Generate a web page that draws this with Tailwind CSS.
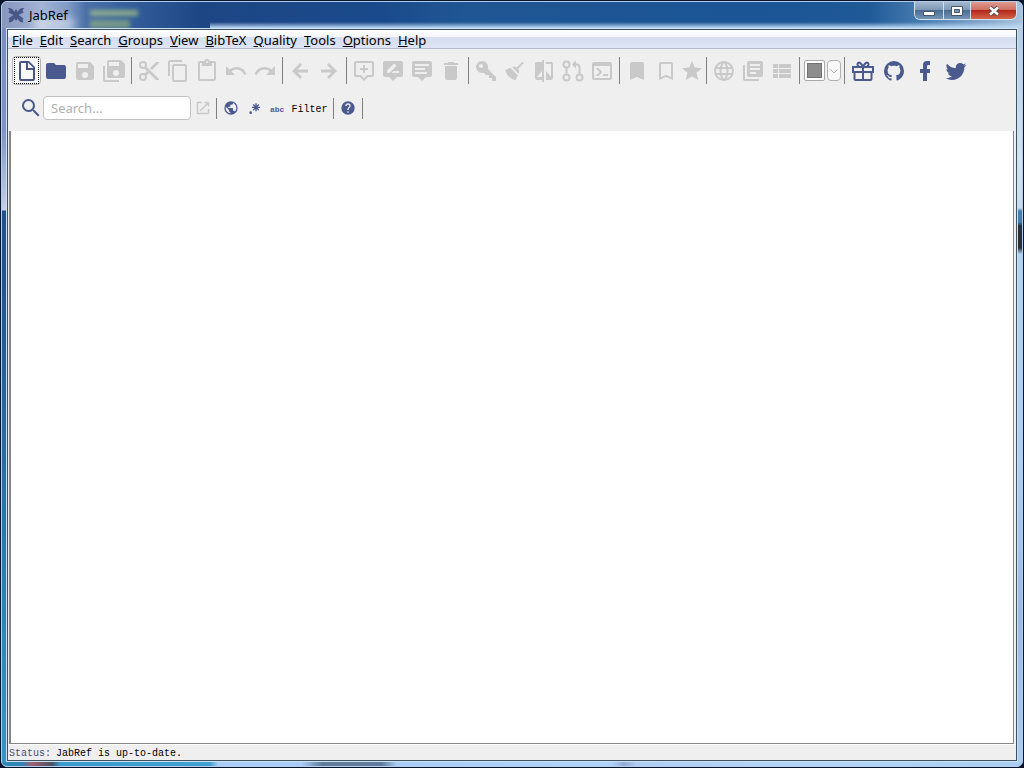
<!DOCTYPE html>
<html lang="en">

<head>
    <meta charset="UTF-8">
    <meta name="viewport" content="width=device-width, initial-scale=1.0">
    <title>JabRef</title>
    <script src="https://cdn.jsdelivr.net/npm/@tailwindcss/browser@4"></script>
</head>

<body class="h-screen flex bg-[#08142c] p-px font-['Noto_Sans','Open_Sans',sans-serif] text-black">

    <!-- Window frame -->
    <div class="flex-1 min-w-0 flex flex-col rounded-md overflow-hidden border border-[#b4cdea] bg-[#a9cdf3]">

        <!-- Title bar -->
        <header
            class="relative h-[26px] shrink-0 flex items-start justify-between overflow-hidden bg-[linear-gradient(to_right,#8796bd_0px,#a3b3d6_40px,#7f9ac6_66px,#4a70a8_84px,#2f5a97_140px,#1d4684_200px,#1a4a8b_380px,#205693_460px,#1b5596_75%,#1f5a97_85%,#4f82b5_91%,#a8c3dd_100%)]">
            <div class="absolute left-22 top-2 w-12 h-1.5 bg-[#9dba86]/80 blur-[2px]"></div>
            <div class="absolute left-22 top-4.5 w-10 h-2 bg-[#8fb07f]/70 blur-[2px]"></div>
            <div class="absolute left-8 top-4 w-10 h-3 bg-white/50 blur-[4px]"></div>
            <div class="absolute left-52 right-0 bottom-0 h-1.5 bg-[linear-gradient(to_bottom,transparent,#bcd9f3)]"></div>
            <div class="relative flex items-center gap-1 pl-[5px] pt-1">
                <svg class="w-4.5 h-4.5" viewBox="0 0 18 18" fill="#485788">
                    <path
                        d="M1 2C4 1.500 6 3 7.500 6L8.500 3.500H9.500L10.500 6C12 3 14 1.500 17 2L15.500 4.500L16.500 6.500L14.500 7.500L11.500 9L14.500 11L16.500 12.500L15.500 14L16.500 16.500C14 16.500 12 15.500 10.500 12.500L9.500 14.500H8.500L7.500 12.500C6 15.500 4 16.500 1.500 16.500L2.500 14L1.500 12.500L3.500 11L6.500 9L3.500 7.500L1.500 6.500L2.500 4.500Z" />
                </svg>
                <h1 class="text-[13px] leading-4">JabRef</h1>
            </div>
            <div
                class="relative flex h-[18px] mr-[5px] rounded-b-md border border-t-0 border-[#d3e2f1] overflow-hidden">
                <button aria-label="Minimize"
                    class="w-7 flex justify-center items-center bg-[linear-gradient(to_bottom,#a3b8ce,#7b97b5_50%,#4b6d93_50%,#7495b5)]">
                    <svg class="w-4 h-4" viewBox="0 0 16 16">
                        <path d="M2.500 8.500H13.500V12.500H2.500Z" fill="#fff" stroke="#46566b" />
                    </svg>
                </button>
                <button aria-label="Maximize"
                    class="w-[27px] flex justify-center items-center border-l border-[#d3e2f1] bg-[linear-gradient(to_bottom,#a3b8ce,#7b97b5_50%,#4b6d93_50%,#7495b5)]">
                    <svg class="w-4 h-4" viewBox="0 0 16 16">
                        <path d="M2.500 3.500H13.500V12.500H2.500Z" fill="#fff" stroke="#46566b" />
                        <path d="M5.500 6.500H10.500V9.500H5.500Z" fill="#7b97b5" stroke="#46566b" />
                    </svg>
                </button>
                <button aria-label="Close"
                    class="w-[46px] flex justify-center items-center border-l border-[#d3e2f1] bg-[linear-gradient(to_bottom,#dd9c8f,#cf6b5c_50%,#b5271c_50%,#d3654a)]">
                    <svg class="w-4 h-4" viewBox="0 0 16 16">
                        <path d="M4 4.500L12 11.500M12 4.500L4 11.500" stroke="#5a4a52" stroke-width="4.500" />
                        <path d="M4 4.500L12 11.500M12 4.500L4 11.500" stroke="#fff" stroke-width="2.500" />
                    </svg>
                </button>
            </div>
        </header>

        <div class="flex-1 min-h-0 flex">
            <div
                class="w-1 shrink-0 bg-[linear-gradient(to_bottom,#7b8dc0,#8291c2_100px,#bcc6e2_172px,#c8d0e8_182px,#1f4f8f_183px,#23589a_40%,#2b8abb_85%,#3596c6)]">
            </div>

            <!-- Client area -->
            <div class="flex-1 min-w-0 border border-[#cfe3f7]">
                <div class="h-full flex flex-col border border-[#3b4f5e] bg-[#efefef]">

                    <nav
                        class="h-[19px] shrink-0 flex items-center gap-[7px] pl-1 pt-px border-b border-[#b5b9c8] text-[13px] leading-4 bg-[linear-gradient(to_bottom,#ffffff,#f4f6fc_38%,#d7def0_42%,#dde4f6)]">
                        <button><u>F</u>ile</button>
                        <button><u>E</u>dit</button>
                        <button><u>S</u>earch</button>
                        <button><u>G</u>roups</button>
                        <button><u>V</u>iew</button>
                        <button><u>B</u>ibTeX</button>
                        <button><u>Q</u>uality</button>
                        <button><u>T</u>ools</button>
                        <button><u>O</u>ptions</button>
                        <button><u>H</u>elp</button>
                    </nav>

                    <!-- Main toolbar -->
                    <div class="h-[43px] shrink-0 flex items-center pl-1 text-[#c9c9c9]">
                        <div class="flex">
                            <button aria-label="New database"
                                class="w-[29px] h-[29px] flex justify-center items-center rounded-sm border border-[#b4b4b4] bg-[#f8f8f8] text-[#485585]">
                                <span class="w-[25px] h-[27px] flex justify-center items-center border border-dotted border-black">
                                    <svg class="w-6 h-6 shrink-0" viewBox="0 0 24 24" fill="currentColor">
                                        <path d="M13,9H18.5L13,3.5V9M6,2H14L20,8V20A2,2 0 0,1 18,22H6C4.89,22 4,21.1 4,20V4C4,2.89 4.89,2 6,2M11,4H6V20H18V11H11V4Z" />
                                    </svg>
                                </span>
                            </button>
                            <button aria-label="Open database" class="w-[29px] flex justify-center items-center text-[#4a5a8f]">
                                <svg class="w-6 h-6" viewBox="0 0 24 24" fill="currentColor">
                                    <path d="M10,4H4C2.89,4 2,4.89 2,6V18A2,2 0 0,0 4,20H20A2,2 0 0,0 22,18V8C22,6.89 21.1,6 20,6H12L10,4Z" />
                                </svg>
                            </button>
                            <button disabled aria-label="Save" class="w-[29px] flex justify-center items-center">
                                <svg class="w-6 h-6" viewBox="0 0 24 24" fill="currentColor">
                                    <path d="M15,9H5V5H15M12,19A3,3 0 0,1 9,16A3,3 0 0,1 12,13A3,3 0 0,1 15,16A3,3 0 0,1 12,19M17,3H5C3.89,3 3,3.9 3,5V19A2,2 0 0,0 5,21H19A2,2 0 0,0 21,19V7L17,3Z" />
                                </svg>
                            </button>
                            <button disabled aria-label="Save all" class="w-[29px] flex justify-center items-center">
                                <svg class="w-6 h-6" viewBox="0 0 24 24" fill="currentColor">
                                    <path d="M17,7V3H7V7H17M14,17A3,3 0 0,0 17,14A3,3 0 0,0 14,11A3,3 0 0,0 11,14A3,3 0 0,0 14,17M19,1L23,5V17A2,2 0 0,1 21,19H7C5.89,19 5,18.1 5,17V3A2,2 0 0,1 7,1H19M1,7H3V21H17V23H3A2,2 0 0,1 1,21V7Z" />
                                </svg>
                            </button>
                        </div>

                        <div class="w-px h-[27px] ml-[3px] mr-[2px] bg-[#808080]"></div>

                        <div class="flex">
                            <button disabled aria-label="Cut" class="w-[29px] flex justify-center items-center">
                                <svg class="w-6 h-6" viewBox="0 0 24 24" fill="currentColor">
                                    <path d="M19,3L13,9L15,11L22,4V3M12,12.5A0.5,0.5 0 0,1 11.5,12A0.5,0.5 0 0,1 12,11.5A0.5,0.5 0 0,1 12.5,12A0.5,0.5 0 0,1 12,12.5M6,20A2,2 0 0,1 4,18C4,16.89 4.9,16 6,16A2,2 0 0,1 8,18C8,19.11 7.1,20 6,20M6,8A2,2 0 0,1 4,6C4,4.89 4.9,4 6,4A2,2 0 0,1 8,6C8,7.11 7.1,8 6,8M9.64,7.64C9.87,7.14 10,6.59 10,6A4,4 0 0,0 6,2A4,4 0 0,0 2,6A4,4 0 0,0 6,10C6.59,10 7.14,9.87 7.64,9.64L10,12L7.64,14.36C7.14,14.13 6.59,14 6,14A4,4 0 0,0 2,18A4,4 0 0,0 6,22A4,4 0 0,0 10,18C10,17.41 9.87,16.86 9.64,16.36L12,14L19,21H22V20L9.64,7.64Z" />
                                </svg>
                            </button>
                            <button disabled aria-label="Copy" class="w-[29px] flex justify-center items-center">
                                <svg class="w-6 h-6" viewBox="0 0 24 24" fill="currentColor">
                                    <path d="M19,21H8V7H19M19,5H8A2,2 0 0,0 6,7V21A2,2 0 0,0 8,23H19A2,2 0 0,0 21,21V7A2,2 0 0,0 19,5M16,1H4A2,2 0 0,0 2,3V17H4V3H16V1Z" />
                                </svg>
                            </button>
                            <button disabled aria-label="Paste" class="w-[29px] flex justify-center items-center">
                                <svg class="w-6 h-6" viewBox="0 0 24 24" fill="currentColor">
                                    <path d="M19,20H5V4H7V7H17V4H19M12,2A1,1 0 0,1 13,3A1,1 0 0,1 12,4A1,1 0 0,1 11,3A1,1 0 0,1 12,2M19,2H14.82C14.4,0.84 13.3,0 12,0C10.7,0 9.6,0.84 9.18,2H5A2,2 0 0,0 3,4V20A2,2 0 0,0 5,22H19A2,2 0 0,0 21,20V4A2,2 0 0,0 19,2Z" />
                                </svg>
                            </button>
                            <button disabled aria-label="Undo" class="w-[29px] flex justify-center items-center">
                                <svg class="w-6 h-6" viewBox="0 0 24 24" fill="currentColor">
                                    <path d="M12.5,8C9.85,8 7.45,9 5.6,10.6L2,7V16H11L7.38,12.38C8.77,11.22 10.54,10.5 12.5,10.5C16.04,10.5 19.05,12.81 20.1,16L22.47,15.22C21.08,11.03 17.15,8 12.5,8Z" />
                                </svg>
                            </button>
                            <button disabled aria-label="Redo" class="w-[29px] flex justify-center items-center">
                                <svg class="w-6 h-6" viewBox="0 0 24 24" fill="currentColor">
                                    <path d="M18.4,10.6C16.55,9 14.15,8 11.5,8C6.85,8 2.92,11.03 1.54,15.22L3.9,16C4.95,12.81 7.95,10.5 11.5,10.5C13.45,10.5 15.23,11.22 16.62,12.38L13,16H22V7L18.4,10.6Z" />
                                </svg>
                            </button>
                        </div>

                        <div class="w-px h-[27px] ml-[3px] mr-[2px] bg-[#808080]"></div>

                        <div class="flex">
                            <button disabled aria-label="Back" class="w-[29px] flex justify-center items-center">
                                <svg class="w-6 h-6" viewBox="0 0 24 24" fill="currentColor">
                                    <path d="M20,10.5V13.5H9.500L14,18L12,20L4,12L12,4L14,6L9.500,10.5Z" />
                                </svg>
                            </button>
                            <button disabled aria-label="Forward" class="w-[29px] flex justify-center items-center">
                                <svg class="w-6 h-6" viewBox="0 0 24 24" fill="currentColor">
                                    <path d="M4,10.5V13.5H14.500L10,18L12,20L20,12L12,4L10,6L14.500,10.5Z" />
                                </svg>
                            </button>
                        </div>

                        <div class="w-px h-[27px] ml-[3px] mr-[2px] bg-[#808080]"></div>

                        <div class="flex">
                            <button disabled aria-label="New entry" class="w-[29px] flex justify-center items-center">
                                <svg class="w-6 h-6" viewBox="0 0 24 24" fill="currentColor">
                                    <path d="M4,2H20A2,2 0 0,1 22,4V16A2,2 0 0,1 20,18H16L12,22L8,18H4A2,2 0 0,1 2,16V4A2,2 0 0,1 4,2M4,4V16H8.83L12,19.17L15.17,16H20V4H4M11,6H13V9H16V11H13V14H11V11H8V9H11V6Z" />
                                </svg>
                            </button>
                            <button disabled aria-label="Edit entry" class="w-[29px] flex justify-center items-center">
                                <svg class="w-6 h-6" viewBox="0 0 24 24" fill="currentColor">
                                    <path d="M4,2A2,2 0 0,0 2,4V16A2,2 0 0,0 4,18H8L12,22L16,18H20A2,2 0 0,0 22,16V4A2,2 0 0,0 20,2H4M6,14V11.5L12.88,4.64C13.07,4.45 13.39,4.45 13.59,4.64L15.35,6.41C15.55,6.61 15.55,6.92 15.35,7.12L8.47,14H6M18,14H10.5L12.5,12H18V14Z" />
                                </svg>
                            </button>
                            <button disabled aria-label="Edit strings" class="w-[29px] flex justify-center items-center">
                                <svg class="w-6 h-6" viewBox="0 0 24 24" fill="currentColor">
                                    <path d="M4,2A2,2 0 0,0 2,4V16A2,2 0 0,0 4,18H8L12,22L16,18H20A2,2 0 0,0 22,16V4A2,2 0 0,0 20,2H4M5,5V7H19V5H5M5,9V11H15V9H5M5,13V15H17V13H5Z" fill-rule="evenodd" />
                                </svg>
                            </button>
                            <button disabled aria-label="Delete" class="w-[29px] flex justify-center items-center">
                                <svg class="w-6 h-6" viewBox="0 0 24 24" fill="currentColor">
                                    <path d="M19,4H15.5L14.5,3H9.5L8.5,4H5V6H19M6,19A2,2 0 0,0 8,21H16A2,2 0 0,0 18,19V7H6V19Z" />
                                </svg>
                            </button>
                        </div>

                        <div class="w-px h-[27px] ml-[3px] mr-[2px] bg-[#808080]"></div>

                        <div class="flex">
                            <button disabled aria-label="Generate keys" class="w-[29px] flex justify-center items-center">
                                <svg class="w-6 h-6" viewBox="0 0 24 24" fill="currentColor">
                                    <path d="M22,18V22H18V19H15V16H12L9.74,13.74C9.19,13.91 8.61,14 8,14A6,6 0 0,1 2,8A6,6 0 0,1 8,2A6,6 0 0,1 14,8C14,8.61 13.91,9.19 13.74,9.74L22,18M7,5A2,2 0 0,0 5,7A2,2 0 0,0 7,9A2,2 0 0,0 9,7A2,2 0 0,0 7,5Z" />
                                </svg>
                            </button>
                            <button disabled aria-label="Cleanup" class="w-[29px] flex justify-center items-center">
                                <svg class="w-6 h-6" viewBox="0 0 24 24" fill="currentColor">
                                    <path d="M19.36,2.72L20.78,4.14L15.06,9.85C16.13,11.39 16.28,13.24 15.38,14.44L9.06,8.12C10.26,7.22 12.11,7.37 13.65,8.44L19.36,2.72M5.93,17.57C3.92,15.56 2.69,13.16 2.35,10.92L7.23,8.83L14.67,16.27L12.58,21.15C10.34,20.81 7.94,19.58 5.93,17.57Z" />
                                </svg>
                            </button>
                            <button disabled aria-label="Merge entries" class="w-[29px] flex justify-center items-center">
                                <svg class="w-6 h-6" viewBox="0 0 24 24" fill="currentColor">
                                    <path d="M19,3H14V5H19V18L14,12V21H19A2,2 0 0,0 21,19V5C21,3.89 20.1,3 19,3M10,18H5L10,12M10,3H5C3.89,3 3,3.89 3,5V19A2,2 0 0,0 5,21H10V23H12V1H10V3Z" />
                                </svg>
                            </button>
                            <button disabled aria-label="Pull changes" class="w-[29px] flex justify-center items-center">
                                <svg class="w-6 h-6" viewBox="0 0 24 24" fill="none" stroke="currentColor" stroke-width="2">
                                    <circle cx="5.500" cy="5.500" r="3" />
                                    <circle cx="5.500" cy="18.500" r="3" />
                                    <circle cx="18.500" cy="18.500" r="3" />
                                    <path d="M5.500 8.500V15.500M18.500 15.500V8A3 3 0 0 0 15.500 5.500H13" />
                                    <path d="M15 1.500V9.500L11 5.500Z" fill="currentColor" stroke="none" />
                                </svg>
                            </button>
                            <button disabled aria-label="Push to application" class="w-[29px] flex justify-center items-center">
                                <svg class="w-6 h-6" viewBox="0 0 24 24" fill="currentColor">
                                    <path d="M20,19V7H4V19H20M20,3A2,2 0 0,1 22,5V19A2,2 0 0,1 20,21H4A2,2 0 0,1 2,19V5C2,3.89 2.9,3 4,3H20M13,17V15H18V17H13M9.58,13L5.57,9H8.4L11.7,12.3C12.09,12.69 12.09,13.33 11.7,13.72L8.42,17H5.59L9.58,13Z" />
                                </svg>
                            </button>
                        </div>

                        <div class="w-px h-[27px] ml-[3px] mr-[2px] bg-[#808080]"></div>

                        <div class="flex">
                            <button disabled aria-label="Mark entries" class="w-[29px] flex justify-center items-center">
                                <svg class="w-6 h-6" viewBox="0 0 24 24" fill="currentColor">
                                    <path d="M17,3H7A2,2 0 0,0 5,5V21L12,18L19,21V5C19,3.89 18.1,3 17,3Z" />
                                </svg>
                            </button>
                            <button disabled aria-label="Unmark entries" class="w-[29px] flex justify-center items-center">
                                <svg class="w-6 h-6" viewBox="0 0 24 24" fill="currentColor">
                                    <path d="M17,18L12,15.82L7,18V5H17M17,3H7A2,2 0 0,0 5,5V21L12,18L19,21V5C19,3.89 18.1,3 17,3Z" />
                                </svg>
                            </button>
                            <button disabled aria-label="Rank" class="w-6 flex justify-center items-center">
                                <svg class="w-6 h-6" viewBox="0 0 24 24" fill="currentColor">
                                    <path d="M12,17.27L18.18,21L16.54,13.97L22,9.24L14.81,8.62L12,2L9.19,8.62L2,9.24L7.45,13.97L5.82,21L12,17.27Z" />
                                </svg>
                            </button>
                        </div>

                        <div class="w-px h-[27px] ml-[2px] mr-[2px] bg-[#808080]"></div>

                        <div class="flex">
                            <button disabled aria-label="Web search" class="w-[29px] flex justify-center items-center">
                                <svg class="w-6 h-6" viewBox="0 0 24 24" fill="currentColor">
                                    <path d="M16.36,14C16.44,13.34 16.5,12.68 16.5,12C16.5,11.32 16.44,10.66 16.36,10H19.74C19.9,10.64 20,11.31 20,12C20,12.69 19.9,13.36 19.74,14M14.59,19.56C15.19,18.45 15.65,17.25 15.97,16H18.92C17.96,17.65 16.43,18.93 14.59,19.56M14.34,14H9.66C9.56,13.34 9.5,12.68 9.5,12C9.5,11.32 9.56,10.65 9.66,10H14.34C14.43,10.65 14.5,11.32 14.5,12C14.5,12.68 14.43,13.34 14.34,14M12,19.96C11.17,18.76 10.5,17.43 10.09,16H13.91C13.5,17.43 12.83,18.76 12,19.96M8,8H5.08C6.03,6.34 7.57,5.06 9.4,4.44C8.8,5.55 8.35,6.75 8,8M5.08,16H8C8.35,17.25 8.8,18.45 9.4,19.56C7.57,18.93 6.03,17.65 5.08,16M4.26,14C4.1,13.36 4,12.69 4,12C4,11.31 4.1,10.64 4.26,10H7.64C7.56,10.66 7.5,11.32 7.5,12C7.5,12.68 7.56,13.34 7.64,14M12,4.03C12.83,5.23 13.5,6.57 13.91,8H10.09C10.5,6.57 11.17,5.23 12,4.03M18.92,8H15.97C15.65,6.75 15.19,5.55 14.59,4.44C16.43,5.07 17.96,6.34 18.92,8M12,2C6.47,2 2,6.5 2,12A10,10 0 0,0 12,22A10,10 0 0,0 22,12A10,10 0 0,0 12,2Z" />
                                </svg>
                            </button>
                            <button disabled aria-label="Toggle groups" class="w-[29px] flex justify-center items-center">
                                <svg class="w-6 h-6" viewBox="0 0 24 24" fill="currentColor">
                                    <path d="M19,7H9V5H19M15,15H9V13H15M19,11H9V9H19M20,2H8A2,2 0 0,0 6,4V16A2,2 0 0,0 8,18H20A2,2 0 0,0 22,16V4C22,2.89 21.1,2 20,2M4,6H2V20A2,2 0 0,0 4,22H18V20H4V6Z" />
                                </svg>
                            </button>
                            <button disabled aria-label="Toggle preview" class="w-[29px] flex justify-center items-center">
                                <svg class="w-6 h-6" viewBox="0 0 24 24" fill="currentColor">
                                    <path d="M9,5V9H21V5M9,19H21V15H9M9,14H21V10H9M3,9H8V5H3M3,19H8V15H3M3,14H8V10H3V14Z" />
                                </svg>
                            </button>
                        </div>

                        <div class="w-px h-[27px] ml-[3px] mr-[4px] bg-[#808080]"></div>

                        <div class="flex gap-[2px]">
                            <button disabled aria-label="Push target" class="w-[21px] h-[21px] p-[2px] rounded-xs border border-[#a8a8a8] bg-white">
                                <span class="block w-full h-full border border-[#727272] bg-[#8d8d8d]"></span>
                            </button>
                            <button disabled aria-label="Choose push target" class="w-[14px] h-[21px] flex justify-center items-center rounded-sm border border-[#b0b0b0] bg-[#f8f8f8]">
                                <svg class="w-2 h-2" viewBox="0 0 8 8" fill="none" stroke="#b0b0b0">
                                    <path d="M0.500 2.500L4 6L7.500 2.500" />
                                </svg>
                            </button>
                        </div>

                        <div class="w-px h-[27px] ml-[3px] mr-[2px] bg-[#808080]"></div>

                        <div class="flex text-[#4a5a8f]">
                            <button aria-label="Donate" class="w-[31px] flex justify-center items-center">
                                <svg class="w-6 h-6" viewBox="0 0 24 24" fill="none" stroke="currentColor" stroke-width="2">
                                    <path d="M2 8H22V13H2ZM3.500 13V20A1 1 0 0 0 4.500 21H19.500A1 1 0 0 0 20.500 20V13M12 8V21" />
                                    <path d="M12 7.500C10 4 8.500 3 7 4C5.500 5.500 7 7.500 8.500 7.500M12 7.500C14 4 15.500 3 17 4C18.500 5.500 17 7.500 15.500 7.500" />
                                </svg>
                            </button>
                            <button aria-label="GitHub" class="w-[31px] flex justify-center items-center">
                                <svg class="w-6 h-6" viewBox="0 0 24 24" fill="currentColor">
                                    <path d="M12,2A10,10 0 0,0 2,12C2,16.42 4.87,20.17 8.84,21.5C9.34,21.58 9.5,21.27 9.5,21C9.5,20.77 9.5,20.14 9.5,19.31C6.73,19.91 6.14,17.97 6.14,17.97C5.68,16.81 5.03,16.5 5.03,16.5C4.12,15.88 5.1,15.9 5.1,15.9C6.1,15.97 6.63,16.93 6.63,16.93C7.5,18.45 8.97,18 9.54,17.76C9.63,17.11 9.89,16.67 10.17,16.42C7.95,16.17 5.62,15.31 5.62,11.5C5.62,10.39 6,9.5 6.65,8.79C6.55,8.54 6.2,7.5 6.75,6.15C6.75,6.15 7.59,5.88 9.5,7.17C10.29,6.95 11.15,6.84 12,6.84C12.85,6.84 13.71,6.95 14.5,7.17C16.41,5.88 17.25,6.15 17.25,6.15C17.8,7.5 17.45,8.54 17.35,8.79C18,9.5 18.38,10.39 18.38,11.5C18.38,15.32 16.04,16.16 13.81,16.41C14.17,16.72 14.5,17.33 14.5,18.26C14.5,19.6 14.5,20.68 14.5,21C14.5,21.27 14.66,21.59 15.17,21.5C19.14,20.16 22,16.42 22,12A10,10 0 0,0 12,2Z" />
                                </svg>
                            </button>
                            <button aria-label="Facebook" class="w-[31px] flex justify-center items-center">
                                <svg class="w-6 h-6" viewBox="0 0 24 24" fill="currentColor">
                                    <path d="M17,2V6H15C14.31,6 14,6.81 14,7.5V10H17V14H14V22H10V14H7V10H10V6A4,4 0 0,1 14,2H17Z" />
                                </svg>
                            </button>
                            <button aria-label="Twitter" class="w-[31px] flex justify-center items-center">
                                <svg class="w-6 h-6" viewBox="0 0 24 24" fill="currentColor">
                                    <path d="M22.46,6C21.69,6.35 20.86,6.58 20,6.69C20.88,6.16 21.56,5.32 21.88,4.31C21.05,4.81 20.13,5.16 19.16,5.36C18.37,4.5 17.26,4 16,4C13.65,4 11.73,5.92 11.73,8.29C11.73,8.63 11.77,8.96 11.84,9.27C8.28,9.09 5.11,7.38 3,4.79C2.63,5.42 2.42,6.16 2.42,6.94C2.42,8.43 3.17,9.75 4.33,10.5C3.62,10.5 2.96,10.3 2.38,10V10.03C2.38,12.11 3.86,13.85 5.82,14.24C5.46,14.34 5.08,14.39 4.69,14.39C4.42,14.39 4.15,14.36 3.89,14.31C4.43,16 6,17.26 7.89,17.29C6.43,18.45 4.58,19.13 2.56,19.13C2.22,19.13 1.88,19.11 1.54,19.07C3.44,20.29 5.7,21 8.12,21C16,21 20.33,14.46 20.33,8.79C20.33,8.6 20.33,8.42 20.32,8.23C21.16,7.63 21.88,6.87 22.46,6Z" />
                                </svg>
                            </button>
                        </div>
                    </div>

                    <!-- Search bar -->
                    <div class="h-[39px] shrink-0 flex items-start pt-1 pl-[11px] text-[#4a5a8f]">
                        <div class="h-6 flex items-center">
                            <label for="search" aria-label="Search">
                                <svg class="w-6 h-6" viewBox="0 0 24 24" fill="currentColor">
                                    <path d="M9.5,3A6.5,6.5 0 0,1 16,9.5C16,11.11 15.41,12.59 14.44,13.73L14.71,14H15.5L20.5,19L19,20.5L14,15.5V14.71L13.73,14.44C12.59,15.41 11.11,16 9.5,16A6.5,6.5 0 0,1 3,9.5A6.5,6.5 0 0,1 9.5,3M9.5,5C7,5 5,7 5,9.5C5,12 7,14 9.5,14C12,14 14,12 14,9.5C14,7 12,5 9.5,5Z" />
                                </svg>
                            </label>
                            <input id="search" type="text" placeholder="Search..."
                                class="w-[148px] h-6 px-[7px] rounded-sm border border-[#c2c2c2] bg-white text-[13px] leading-4 text-black placeholder:text-[#b0b0b0]">
                            <button disabled aria-label="Open in new window" class="w-6 flex justify-center text-[#c9c9c9]">
                                <svg class="w-3.5 h-3.5" viewBox="0 0 14 14" fill="none" stroke="currentColor" stroke-width="1.500">
                                    <path d="M6 1.500H1.500V12.500H12.500V8M4 10L12 2M8.500 1.500H12.500V5.500" />
                                </svg>
                            </button>
                            <div class="w-px h-[21px] ml-px mr-[6px] bg-[#808080]"></div>
                            <button aria-label="Global search" class="mr-[7px]">
                                <svg class="w-4 h-4" viewBox="0 0 24 24" fill="currentColor">
                                    <path d="M17.9,17.39C17.64,16.59 16.89,16 16,16H15V13A1,1 0 0,0 14,12H8V10H10A1,1 0 0,0 11,9V7H13A2,2 0 0,0 15,5V4.59C17.93,5.77 20,8.64 20,12C20,14.08 19.2,15.97 17.9,17.39M11,19.93C7.05,19.44 4,16.08 4,12C4,11.38 4.08,10.78 4.21,10.21L9,15V16A2,2 0 0,0 11,18M12,2A10,10 0 0,0 2,12A10,10 0 0,0 12,22A10,10 0 0,0 22,12A10,10 0 0,0 12,2Z" />
                                </svg>
                            </button>
                            <button aria-label="Regular expression" class="mr-2">
                                <svg class="w-4 h-4" viewBox="0 0 24 24" fill="currentColor">
                                    <path d="M16,16.92C15.67,16.97 15.34,17 15,17C14.66,17 14.33,16.97 14,16.92V13.41L11.5,15.89C11,15.5 10.5,15 10.11,14.5L12.59,12H9.08C9.03,11.67 9,11.34 9,11C9,10.66 9.03,10.33 9.08,10H12.59L10.11,7.5C10.3,7.25 10.5,7 10.76,6.76C11,6.5 11.25,6.3 11.5,6.11L14,8.59V5.08C14.33,5.03 14.66,5 15,5C15.34,5 15.67,5.03 16,5.08V8.59L18.5,6.11C19,6.5 19.5,7 19.89,7.5L17.41,10H20.92C20.97,10.33 21,10.66 21,11C21,11.34 20.97,11.67 20.92,12H17.41L19.89,14.5C19.7,14.75 19.5,15 19.24,15.24C19,15.5 18.75,15.7 18.5,15.89L16,13.41V16.92M5,19A2,2 0 0,1 7,17A2,2 0 0,1 9,19A2,2 0 0,1 7,21A2,2 0 0,1 5,19Z" />
                                </svg>
                            </button>
                            <button aria-label="Case sensitive" class="pt-[3px] mr-[7px] font-['Liberation_Mono',monospace] text-[8px] leading-3 font-bold">abc</button>
                            <button class="pt-[3px] font-['Liberation_Mono',monospace] text-[10px] leading-3 text-black">Filter</button>
                            <div class="w-px h-[21px] mx-[6px] bg-[#808080]"></div>
                            <button aria-label="Help">
                                <svg class="w-4 h-4" viewBox="0 0 24 24" fill="currentColor">
                                    <path d="M15.07,11.25L14.17,12.17C13.45,12.89 13,13.5 13,15H11V14.5C11,13.39 11.45,12.39 12.17,11.67L13.41,10.41C13.78,10.05 14,9.55 14,9C14,7.89 13.1,7 12,7A2,2 0 0,0 10,9H8A4,4 0 0,1 12,5A4,4 0 0,1 16,9C16,9.88 15.64,10.67 15.07,11.25M13,19H11V17H13M12,2A10,10 0 0,0 2,12A10,10 0 0,0 12,22A10,10 0 0,0 22,12C22,6.47 17.5,2 12,2Z" />
                                </svg>
                            </button>
                            <div class="w-px h-[21px] ml-[6px] bg-[#808080]"></div>
                        </div>
                    </div>

                    <!-- Empty library area -->
                    <main class="flex-1 ml-px mr-[2px] border-l-2 border-r border-b border-[#868686] bg-white"></main>

                    <footer class="h-4 shrink-0 flex items-center gap-[5px] pl-px pt-[3px] border-t border-white font-['Liberation_Mono',monospace] text-[10px] leading-3">
                        <span class="text-[#4a4a78]">Status:</span>
                        <span>JabRef is up-to-date.</span>
                    </footer>
                </div>
            </div>

            <div
                class="w-1 shrink-0 bg-[linear-gradient(to_bottom,#b5cce4,#d5e2ef_130px,#cbd9ea_180px,#4380b0_183px,#4380b0_194px,#2b3038_198px,#2b3038_220px,#b0d3f2_226px,#abcff5_60%,#9bb9e3_80%,#a9cdf3)]">
            </div>
        </div>

        <div
            class="h-1 shrink-0 bg-[linear-gradient(to_right,#2f86b8_0px,#2f86b8_20px,#a06070_30px,#4a5060_50px,#3a9ccc_58px,#3f9fd0_208px,#a9cdf8_216px,#a9cdf8_300px,#5f7c9c_320px,#5f7c9c_380px,#a9cdf8_395px,#b0d3fb_610px,#93a9d5_622px,#b0cdf6_635px,#b3d5fa_80%,#a9cdf3)]">
        </div>
    </div>

</body>

</html>
